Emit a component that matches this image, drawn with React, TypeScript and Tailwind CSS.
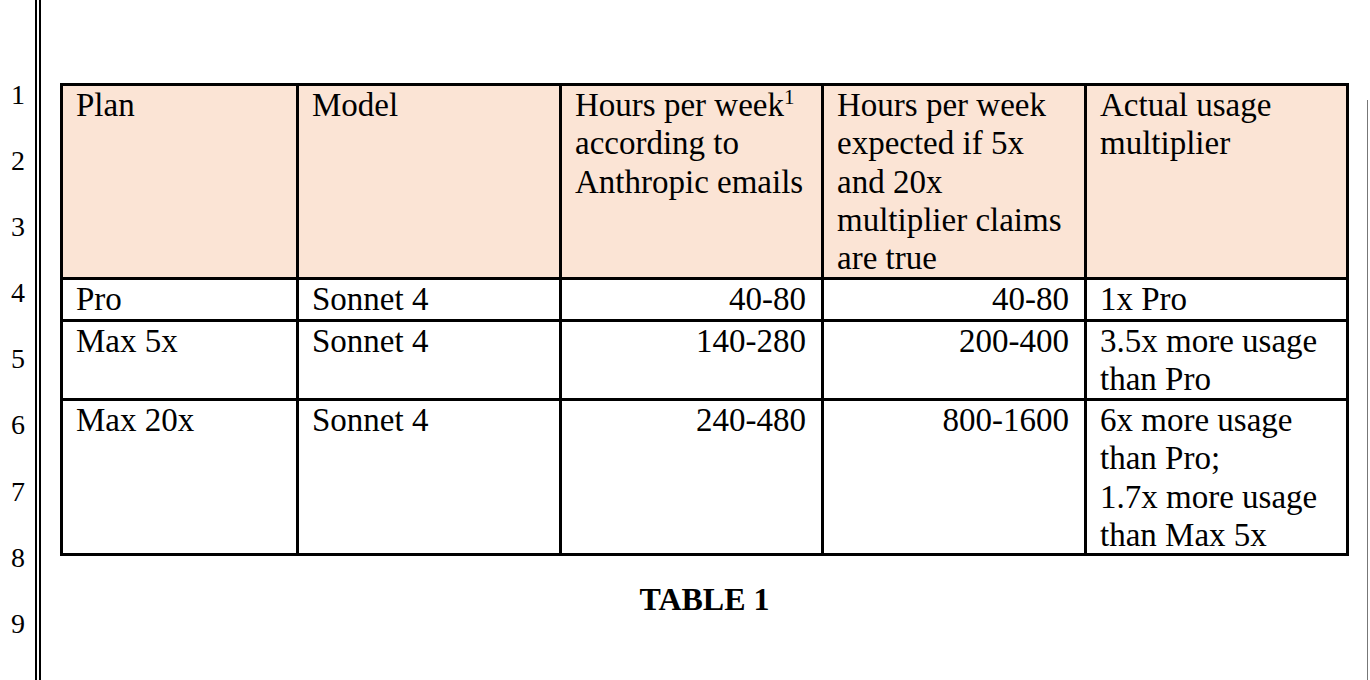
const header: string[][] = [
  ["Plan"],
  ["Model"],
  ["Hours per week", "according to", "Anthropic emails"],
  ["Hours per week", "expected if 5x", "and 20x", "multiplier claims", "are true"],
  ["Actual usage", "multiplier"],
];

const rows = [
  { plan: "Max", label: "Pro", model: "Sonnet 4", claimed: "40-80", expected: "40-80", actual: ["1x Pro"] },
  { plan: "Max", label: "Max 5x", model: "Sonnet 4", claimed: "140-280", expected: "200-400", actual: ["3.5x more usage", "than Pro"] },
  {
    plan: "Max",
    label: "Max 20x",
    model: "Sonnet 4",
    claimed: "240-480",
    expected: "800-1600",
    actual: ["6x more usage", "than Pro;", "1.7x more usage", "than Max 5x"],
  },
];

const cell = "whitespace-nowrap pl-[13px] pr-[15px] leading-[38.3px]";

function Lines({ lines }: { lines: string[] }) {
  return (
    <>
      {lines.map((line) => (
        <div key={line}>{line}</div>
      ))}
    </>
  );
}

export default function App() {
  return (
    <div className="flex h-[680px] w-[1370px] overflow-hidden bg-white font-['Liberation_Serif','Times_New_Roman',serif] text-black">
      <div className="w-[35px] shrink-0 pr-[10px] pt-[62px] text-right text-[28px] leading-[66.1px]">
        {[1, 2, 3, 4, 5, 6, 7, 8, 9].map((n) => (
          <div key={n}>{n}</div>
        ))}
      </div>
      <div className="w-[2px] shrink-0 bg-black" />
      <div className="w-[2px] shrink-0" />
      <div className="w-[2px] shrink-0 bg-black" />

      <div className="flex-1 pl-[19px] pt-[83px]">
        <div className="w-[1289px]">
          <div className="grid grid-cols-[233px_260px_259px_260px_259px] grid-rows-[191px_39px_76px_152px] gap-[3px] bg-black p-[3px] text-[33px]">
            {header.map((lines, i) => (
              <div key={i} className={`${cell} bg-[#fbe4d5]`}>
                {i === 2 ? (
                  <>
                    <div>
                      Hours per week
                      <span className="align-[12px] text-[21px] leading-none">1</span>
                    </div>
                    <div>according to</div>
                    <div>Anthropic emails</div>
                  </>
                ) : (
                  <Lines lines={lines} />
                )}
              </div>
            ))}
            {rows.map((row) => (
              <div key={row.label} className="contents">
                <div className={`${cell} bg-white`}>{row.label}</div>
                <div className={`${cell} bg-white`}>{row.model}</div>
                <div className={`${cell} bg-white text-right`}>{row.claimed}</div>
                <div className={`${cell} bg-white text-right`}>{row.expected}</div>
                <div className={`${cell} bg-white`}>
                  <Lines lines={row.actual} />
                </div>
              </div>
            ))}
          </div>
          <p className="mt-[24px] text-center text-[32px] font-bold leading-[38.3px]">TABLE 1</p>
        </div>
      </div>

      <div className="mt-[100px] w-[1px] shrink-0 bg-[#777]" />
      <div className="w-[2px] shrink-0" />
    </div>
  );
}
